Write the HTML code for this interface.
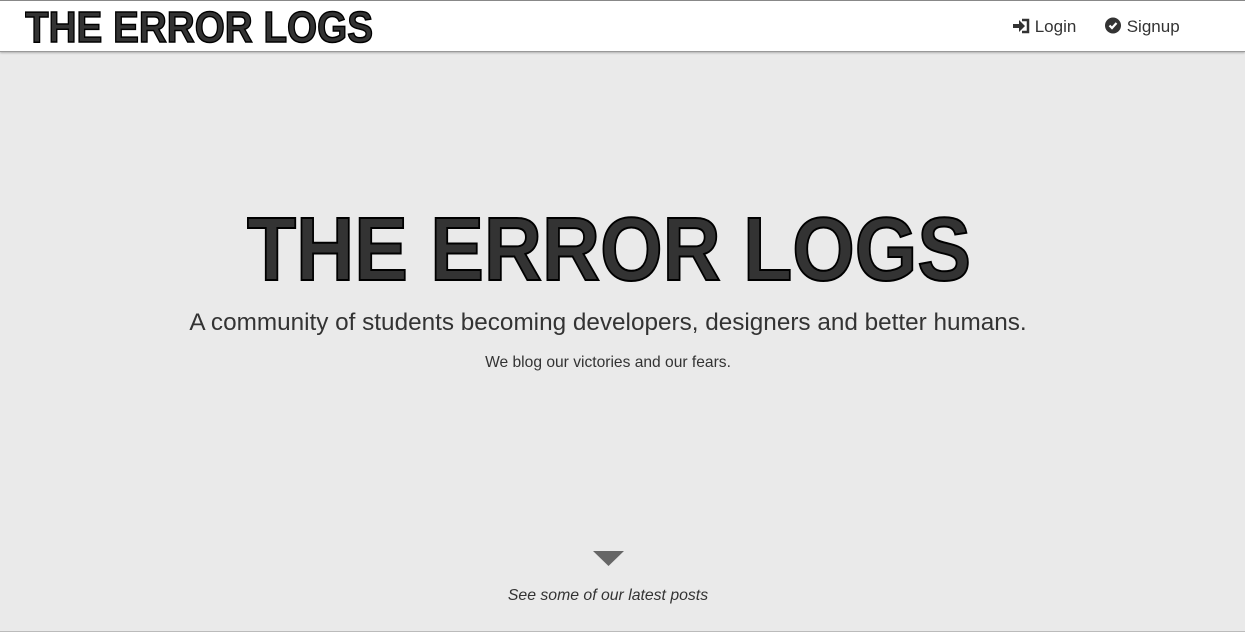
<!DOCTYPE html>
<html><head><meta charset="utf-8"><style>
*{margin:0;padding:0;box-sizing:border-box}
body{width:1245px;height:632px;background:#eaeaea;font-family:"Liberation Sans",sans-serif;color:#333;position:relative;overflow:hidden}
.nav{position:absolute;top:0;left:0;width:1245px;height:52px;background:#fff;border-top:1px solid #888;border-bottom:1px solid #999;box-shadow:0 1px 2px rgba(0,0,0,.25)}
.nav a{position:absolute;top:16px;font-size:17px;color:#333;text-decoration:none}
.t{position:absolute;left:0;width:1216px;text-align:center}
.bot{position:absolute;bottom:0;left:0;width:1245px;height:1px;background:#bbb}
</style></head><body>
<div class="nav">
<svg style="position:absolute;left:25px;top:6px" width="350" height="38"><text x="0" y="35" textLength="348" lengthAdjust="spacingAndGlyphs" font-family="Liberation Sans" font-weight="bold" font-size="44" fill="#333" stroke="#000" stroke-width="1.5">THE ERROR LOGS</text></svg>
<a style="left:1012px"><svg width="18" height="16" style="vertical-align:-2px"><path d="M1 6h6V2l6 6-6 6v-4H1z" fill="#333"/><path d="M10 2h6v12h-6" fill="none" stroke="#333" stroke-width="2.5"/></svg> Login</a>
<a style="left:1105px"><svg width="17" height="17" style="vertical-align:-2px"><circle cx="8" cy="8.5" r="8" fill="#333"/><path d="M4.5 8.5l2.5 2.5 4.5-5" fill="none" stroke="#fff" stroke-width="2.2"/></svg> Signup</a>
</div>
<svg style="position:absolute;left:246px;top:206px" width="728" height="80"><text x="1" y="74" textLength="724" lengthAdjust="spacingAndGlyphs" font-family="Liberation Sans" font-weight="bold" font-size="90" fill="#333" stroke="#000" stroke-width="2">THE ERROR LOGS</text></svg>
<div class="t" style="top:309px;font-size:24.3px">A community of students becoming developers, designers and better humans.</div>
<div class="t" style="top:354px;font-size:15.6px">We blog our victories and our fears.</div>
<svg style="position:absolute;left:593px;top:551px" width="31" height="16"><path d="M0 0h31L15.5 15z" fill="#666"/></svg>
<div class="t" style="top:587px;font-size:15.8px;font-style:italic">See some of our latest posts</div>
<div class="bot"></div>
</body></html>
